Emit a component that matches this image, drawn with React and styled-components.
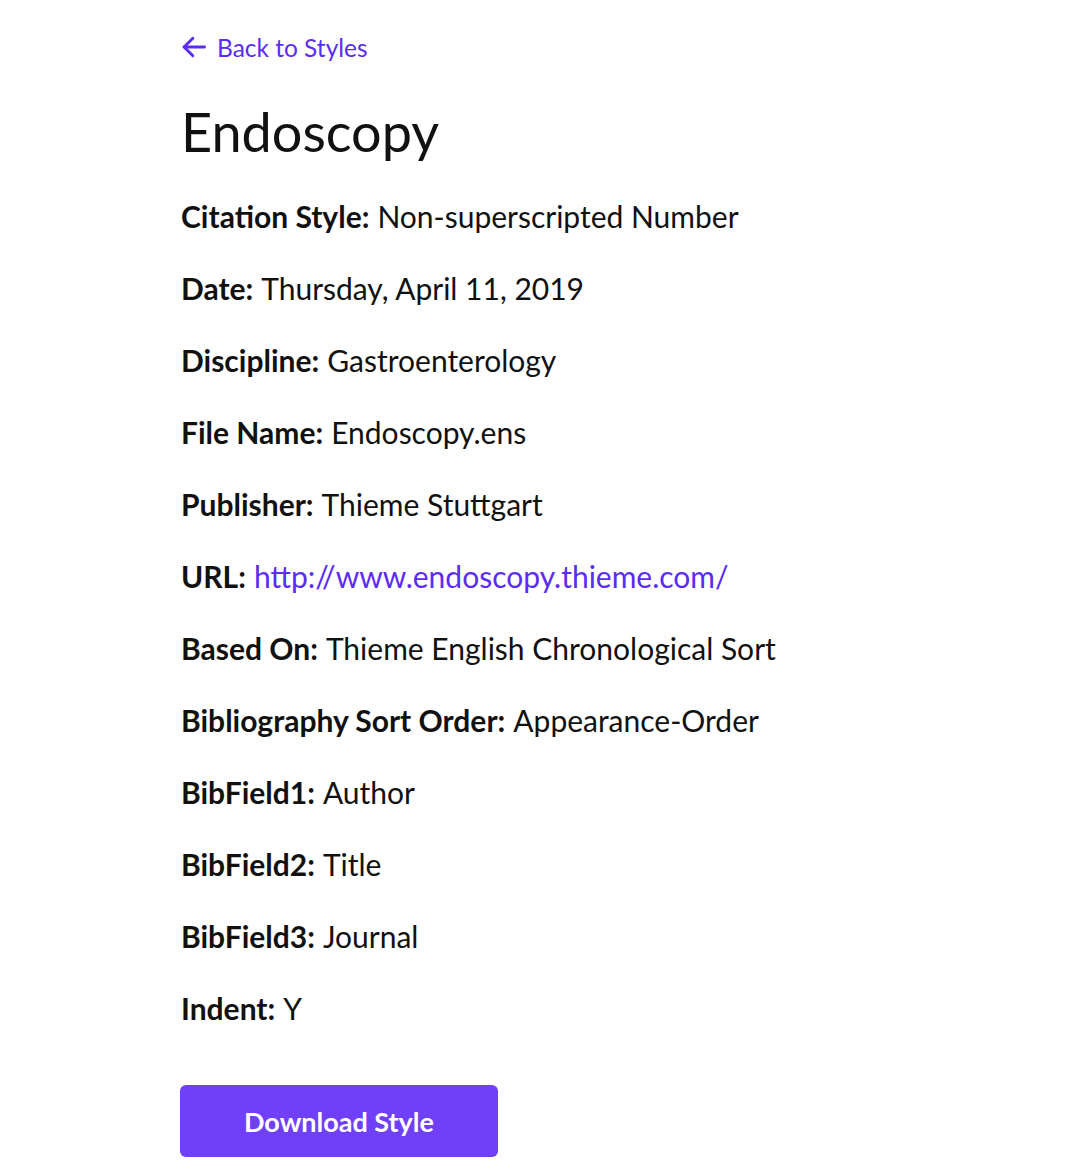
import styled, { createGlobalStyle } from 'styled-components'

const GlobalStyle = createGlobalStyle`
    body {
        margin: 0;
        background: #fff;
        color: #111;
        font-family: 'Lato', 'Noto Sans', sans-serif;
    }
`

const Page = styled.main`
    padding: 30px 0 0 180px;
`

const BackLink = styled.a`
    display: inline-flex;
    align-items: center;
    gap: 9px;
    color: #5b2cf6;
    font-size: 24.5px;
    text-decoration: none;
    height: 34px;
`

const Title = styled.h1`
    margin: 38px 0 36px 1px;
    font-size: 54px;
    font-weight: 400;
    line-height: 60px;
`

const FieldList = styled.dl`
    margin: 0;
    display: flex;
    flex-direction: column;
    gap: 36px;
`

const Field = styled.div`
    display: flex;
    gap: 8px;
    font-size: 30px;
    line-height: 36px;
    padding-left: 1px;

    dt {
        font-weight: 700;
    }

    dd {
        margin: 0;
    }

    a {
        color: #5b2cf6;
        text-decoration: none;
    }
`

const DownloadButton = styled.button`
    margin-top: 59px;
    width: 318px;
    height: 72px;
    border: none;
    border-radius: 6px;
    background: #7040f8;
    color: #fff;
    font-family: inherit;
    font-size: 27px;
    font-weight: 700;
    cursor: pointer;
`

const fields = [
    ['Citation Style', 'Non-superscripted Number'],
    ['Date', 'Thursday, April 11, 2019'],
    ['Discipline', 'Gastroenterology'],
    ['File Name', 'Endoscopy.ens'],
    ['Publisher', 'Thieme Stuttgart'],
    ['URL', 'http://www.endoscopy.thieme.com/', true],
    ['Based On', 'Thieme English Chronological Sort'],
    ['Bibliography Sort Order', 'Appearance-Order'],
    ['BibField1', 'Author'],
    ['BibField2', 'Title'],
    ['BibField3', 'Journal'],
    ['Indent', 'Y'],
]

const ArrowLeft = () => (
    <svg width="28" height="28" viewBox="0 0 24 24" fill="none" stroke="currentColor" strokeWidth="2.5" strokeLinecap="round" strokeLinejoin="round">
        <path d="M21 12H3.5" />
        <path d="M11 4.5L3.5 12l7.5 7.5" />
    </svg>
)

export default function App() {
    return (
        <Page>
            <GlobalStyle />
            <BackLink href='#'>
                <ArrowLeft />
                Back to Styles
            </BackLink>
            <Title>Endoscopy</Title>
            <FieldList>
                {fields.map(([label, value, isLink]) => (
                    <Field key={label}>
                        <dt>{label}:</dt>
                        <dd>{isLink ? <a href={value}>{value}</a> : value}</dd>
                    </Field>
                ))}
            </FieldList>
            <DownloadButton type='button'>Download Style</DownloadButton>
        </Page>
    )
}
